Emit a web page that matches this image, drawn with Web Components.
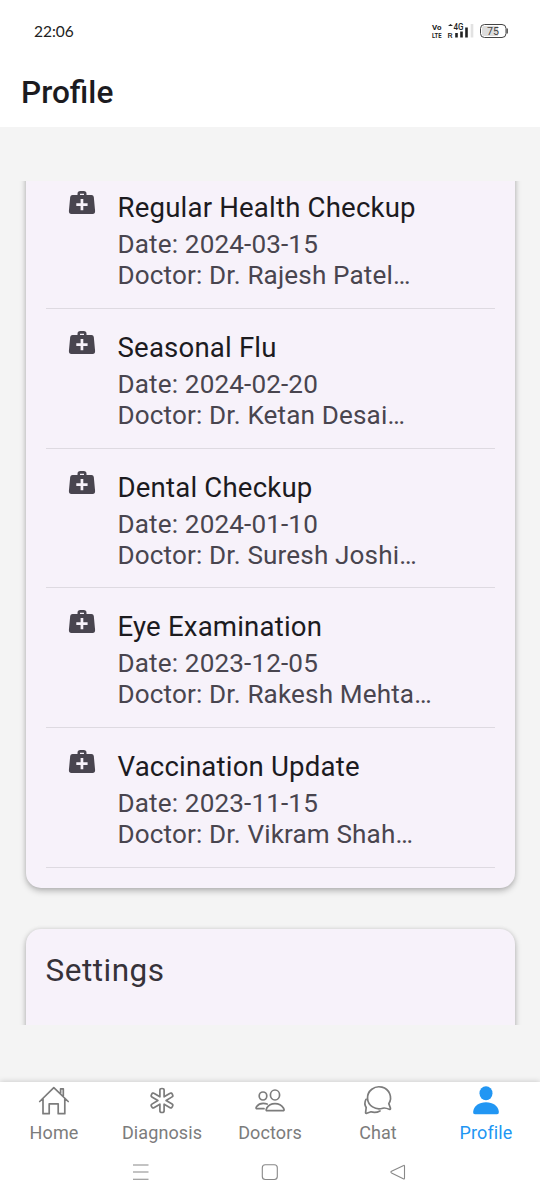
<!DOCTYPE html>
<html lang="en">
<head>
<meta charset="utf-8">
<title>Profile</title>
<style>
html,body{margin:0;height:100%}
body{font-family:Roboto,"Liberation Sans",sans-serif;background:#f4f4f4;overflow:hidden}
</style>
</head>
<body>
<profile-app></profile-app>
<script>
const define = (name, html) => customElements.define(name, class extends HTMLElement {
  constructor() {
    super();
    const t = document.createElement('template');
    t.innerHTML = html;
    this.attachShadow({mode: 'open'}).append(t.content.cloneNode(true));
  }
});

define('status-bar', `
<style>
:host{display:flex;height:62px;padding:0 32px 0 34px;align-items:center;justify-content:space-between;box-sizing:border-box;color:#222}
.time{font:400 15.5px/20px Lato,sans-serif;letter-spacing:-.05px}
svg{display:block}
text{font-family:Roboto,sans-serif}
</style>
<span class="time">22:06</span>
<svg width="78" height="20" viewBox="430 21 78 20">
<g fill="#222" font-weight="700">
<text x="432" y="30.300" font-size="7.800" textLength="9.500" lengthAdjust="spacingAndGlyphs">Vo</text>
<text x="432" y="38" font-size="7.800" textLength="9.500" lengthAdjust="spacingAndGlyphs">LTE</text>
<text x="453.500" y="30.300" font-size="8.500" font-weight="500" textLength="10" lengthAdjust="spacingAndGlyphs">4G</text>
<text x="447.500" y="38" font-size="8" font-weight="500">R</text>
</g>
<path d="M448 26l2.500-2 2.500 2z" fill="#222"/>
<path d="M456.500 33v4.500M461.500 31.500v6M466.500 27.500v10" stroke="#222" stroke-width="2.600"/>
<path d="M472 24v13.500" stroke="#e2e2e2" stroke-width="2.600"/>
<rect x="480.500" y="24.500" width="25.500" height="13" rx="4" fill="#fff" stroke="#444"/>
<path d="M484 26h14v10h-14a2 2 0 0 1-2-2v-6a2 2 0 0 1 2-2z" fill="#ddd"/>
<path d="M507.200 28.500v5" stroke="#444" stroke-width="1.300"/>
<text x="487" y="35" font-size="11" fill="#444" textLength="12" lengthAdjust="spacingAndGlyphs">75</text>
</svg>`);

define('page-header', `
<style>
:host{display:flex;height:64.5px;padding:0 21px;box-sizing:border-box}
h1{margin:12px 0 0;font-size:31.6px;line-height:38px;font-weight:500;color:#1c1b1f}
</style><h1><slot></slot></h1>`);

define('surface-card', `
<style>
:host{display:block;background:#f7f2fa;border-radius:15px;padding:0 20px;box-shadow:0 3px 6px rgba(0,0,0,.25),0 0 4px rgba(0,0,0,.1)}
</style><slot></slot>`);

define('medical-record', `
<style>
:host{display:flex;height:139.8px;box-sizing:border-box;border-bottom:1px solid #dedae1;padding:18px 0 0 21px}
svg{flex:none;margin:2px 18px 0 0;width:30px;height:30px}
.text{white-space:nowrap;padding-left:3px}
.title{font-size:27.6px;line-height:42px;color:#1c1b1f;letter-spacing:.18px}
.detail{font-size:26.1px;line-height:31px;color:#49454f;letter-spacing:.14px}
</style>
<svg viewBox="0 0 30 30"><path fill="#49454f" fill-rule="evenodd" d="M10.500 6V4.800Q10.500 2 13.300 2h3.400q2.800 0 2.800 2.800V6h5Q26.500 6 26.800 8l1.300 14q.1 3-2.500 3H4.400q-2.600 0-2.500-3L3.200 8Q3.500 6 5.500 6zM13 6h4V4.700h-4zM13.600 9.900v4.300h-4.300v2.700h4.300v4.300h2.700v-4.300h4.300v-2.700h-4.300v-4.300z"/></svg>
<div class="text"><div class="title"><slot name="title"></slot></div><div class="detail"><slot name="date"></slot></div><div class="detail"><slot name="doctor"></slot></div></div>`);

define('tab-item', `
<style>
:host{display:flex;flex-direction:column;align-items:center;flex:1;color:#7c7c7c;font-size:18px;line-height:24px;letter-spacing:.1px}
:host([active]){color:#2196f3}
::slotted(svg){display:block;width:36px;height:36px;overflow:visible;fill:none;stroke:currentColor;stroke-width:1.7;stroke-linejoin:round;stroke-linecap:round}
.label{margin-top:2px}
</style><slot name="icon"></slot><span class="label"><slot></slot></span>`);

define('tab-bar', `
<style>
:host{display:flex;height:66px;padding-top:1px;box-sizing:border-box;background:#fff}
</style>
<tab-item><svg slot="icon" viewBox="36 1083 36 36"><path d="M39.700 1101.500 53.800 1087.700 68.200 1101.500M43 1098.700v15h6.200v-9.900h9v9.900h6.600v-15M60.600 1093v-4.200h2.700v7.200"/></svg>Home</tab-item>
<tab-item><svg slot="icon" viewBox="144 1083 36 36"><path d="M159.900 1090q0-1.500 2.100-1.500t2.100 1.500v6.800l6-3.500q1.300-.8 2.300 1t-.3 2.600l-6 3.600 6 3.600q1.300.8.3 2.600t-2.300 1l-6-3.500v6.800q0 1.500-2.100 1.500t-2.100-1.500v-6.800l-6 3.500q-1.300.8-2.300-1t.3-2.600l6-3.600-6-3.600q-1.300-.8-.3-2.600t2.300-1l6 3.500z"/></svg>Diagnosis</tab-item>
<tab-item><svg slot="icon" viewBox="252 1083 36 36"><ellipse cx="275" cy="1095" rx="4.600" ry="5"/><ellipse cx="263" cy="1096" rx="3.800" ry="4"/><path d="M266.500 1110.600Q265.800 1109.800 266.800 1108q2.500-4.300 8.200-4.300t8.400 4.300q1.300 2.300.2 2.600zM264 1108.700h-7.500q-1-.5.200-2.300 2.200-3.100 6.500-3.100 2.300 0 3.900.8"/></svg>Doctors</tab-item>
<tab-item><svg slot="icon" viewBox="360 1083 36 36"><path d="M388.800 1103.600A11.500 11 0 1 0 382.800 1108.200Q385 1107.500 389.900 1109.500q.8-.1.500-1.500zM366 1099.300q-2.300 4.200.2 8.200l-.6 5.200q.2.900 1.200.5l4.200-1.400q4.600 1.400 9-.9"/></svg>Chat</tab-item>
<tab-item active><svg slot="icon" viewBox="468 1083 36 36" style="fill:currentColor;stroke:none"><ellipse cx="486" cy="1093.300" rx="6.500" ry="7"/><path d="M475 1114.300h22q2 0 1.900-2.200c-.7-6.300-5.900-9.800-12.900-9.800s-12.200 3.500-12.900 9.800q-.1 2.200 1.900 2.200z"/></svg>Profile</tab-item>`);

define('system-nav', `
<style>
:host{display:flex;height:52px;background:#fff;justify-content:center;padding-top:14px;box-sizing:border-box}
svg{display:block}
</style>
<svg width="280" height="20" viewBox="130 1162 280 20" fill="none" stroke="#888" stroke-width="1.100" stroke-linejoin="round"><path d="M133 1165h15.500M133 1172h15.500M133 1179.300h15.500"/><rect x="262.300" y="1164.700" width="15" height="14.800" rx="3"/><path d="M403.700 1165.500Q404.500 1165 404.500 1166v12q0 1.500-1.200.8l-11.800-5.900q-1.200-.8 0-1.600z"/></svg>`);

const records = [
  ['Regular Health Checkup', '2024-03-15', 'Rajesh Patel'],
  ['Seasonal Flu', '2024-02-20', 'Ketan Desai'],
  ['Dental Checkup', '2024-01-10', 'Suresh Joshi'],
  ['Eye Examination', '2023-12-05', 'Rakesh Mehta'],
  ['Vaccination Update', '2023-11-15', 'Vikram Shah']
];

define('profile-app', `
<style>
:host{display:flex;flex-direction:column;height:1200px;background:#f4f4f4}
.top{background:#fff;flex:none}
.scroll{flex:none;height:844px;margin-top:54.5px;padding:0 25.500px 0 25.500px;overflow:hidden;display:flex;flex-direction:column}
.history{flex:none;margin-top:-72px;padding-top:60px;padding-bottom:20px}
.settings{flex:none;margin-top:41px;height:160px}
h2{font-size:31.5px;line-height:42px;margin:21px 0 0;font-weight:400;color:#363239;letter-spacing:.5px}
.bottom{margin-top:auto;background:#fff;box-shadow:0 0 6px rgba(0,0,0,.2)}
</style>
<div class="top"><status-bar></status-bar><page-header>Profile</page-header></div>
<div class="scroll">
<surface-card class="history">${records.map(([t, d, n]) => `<medical-record><span slot="title">${t}</span><span slot="date">Date: ${d}</span><span slot="doctor">Doctor: Dr. ${n}…</span></medical-record>`).join('')}</surface-card>
<surface-card class="settings"><h2>Settings</h2></surface-card>
</div>
<div class="bottom"><tab-bar></tab-bar><system-nav></system-nav></div>`);
</script>
</body>
</html>
